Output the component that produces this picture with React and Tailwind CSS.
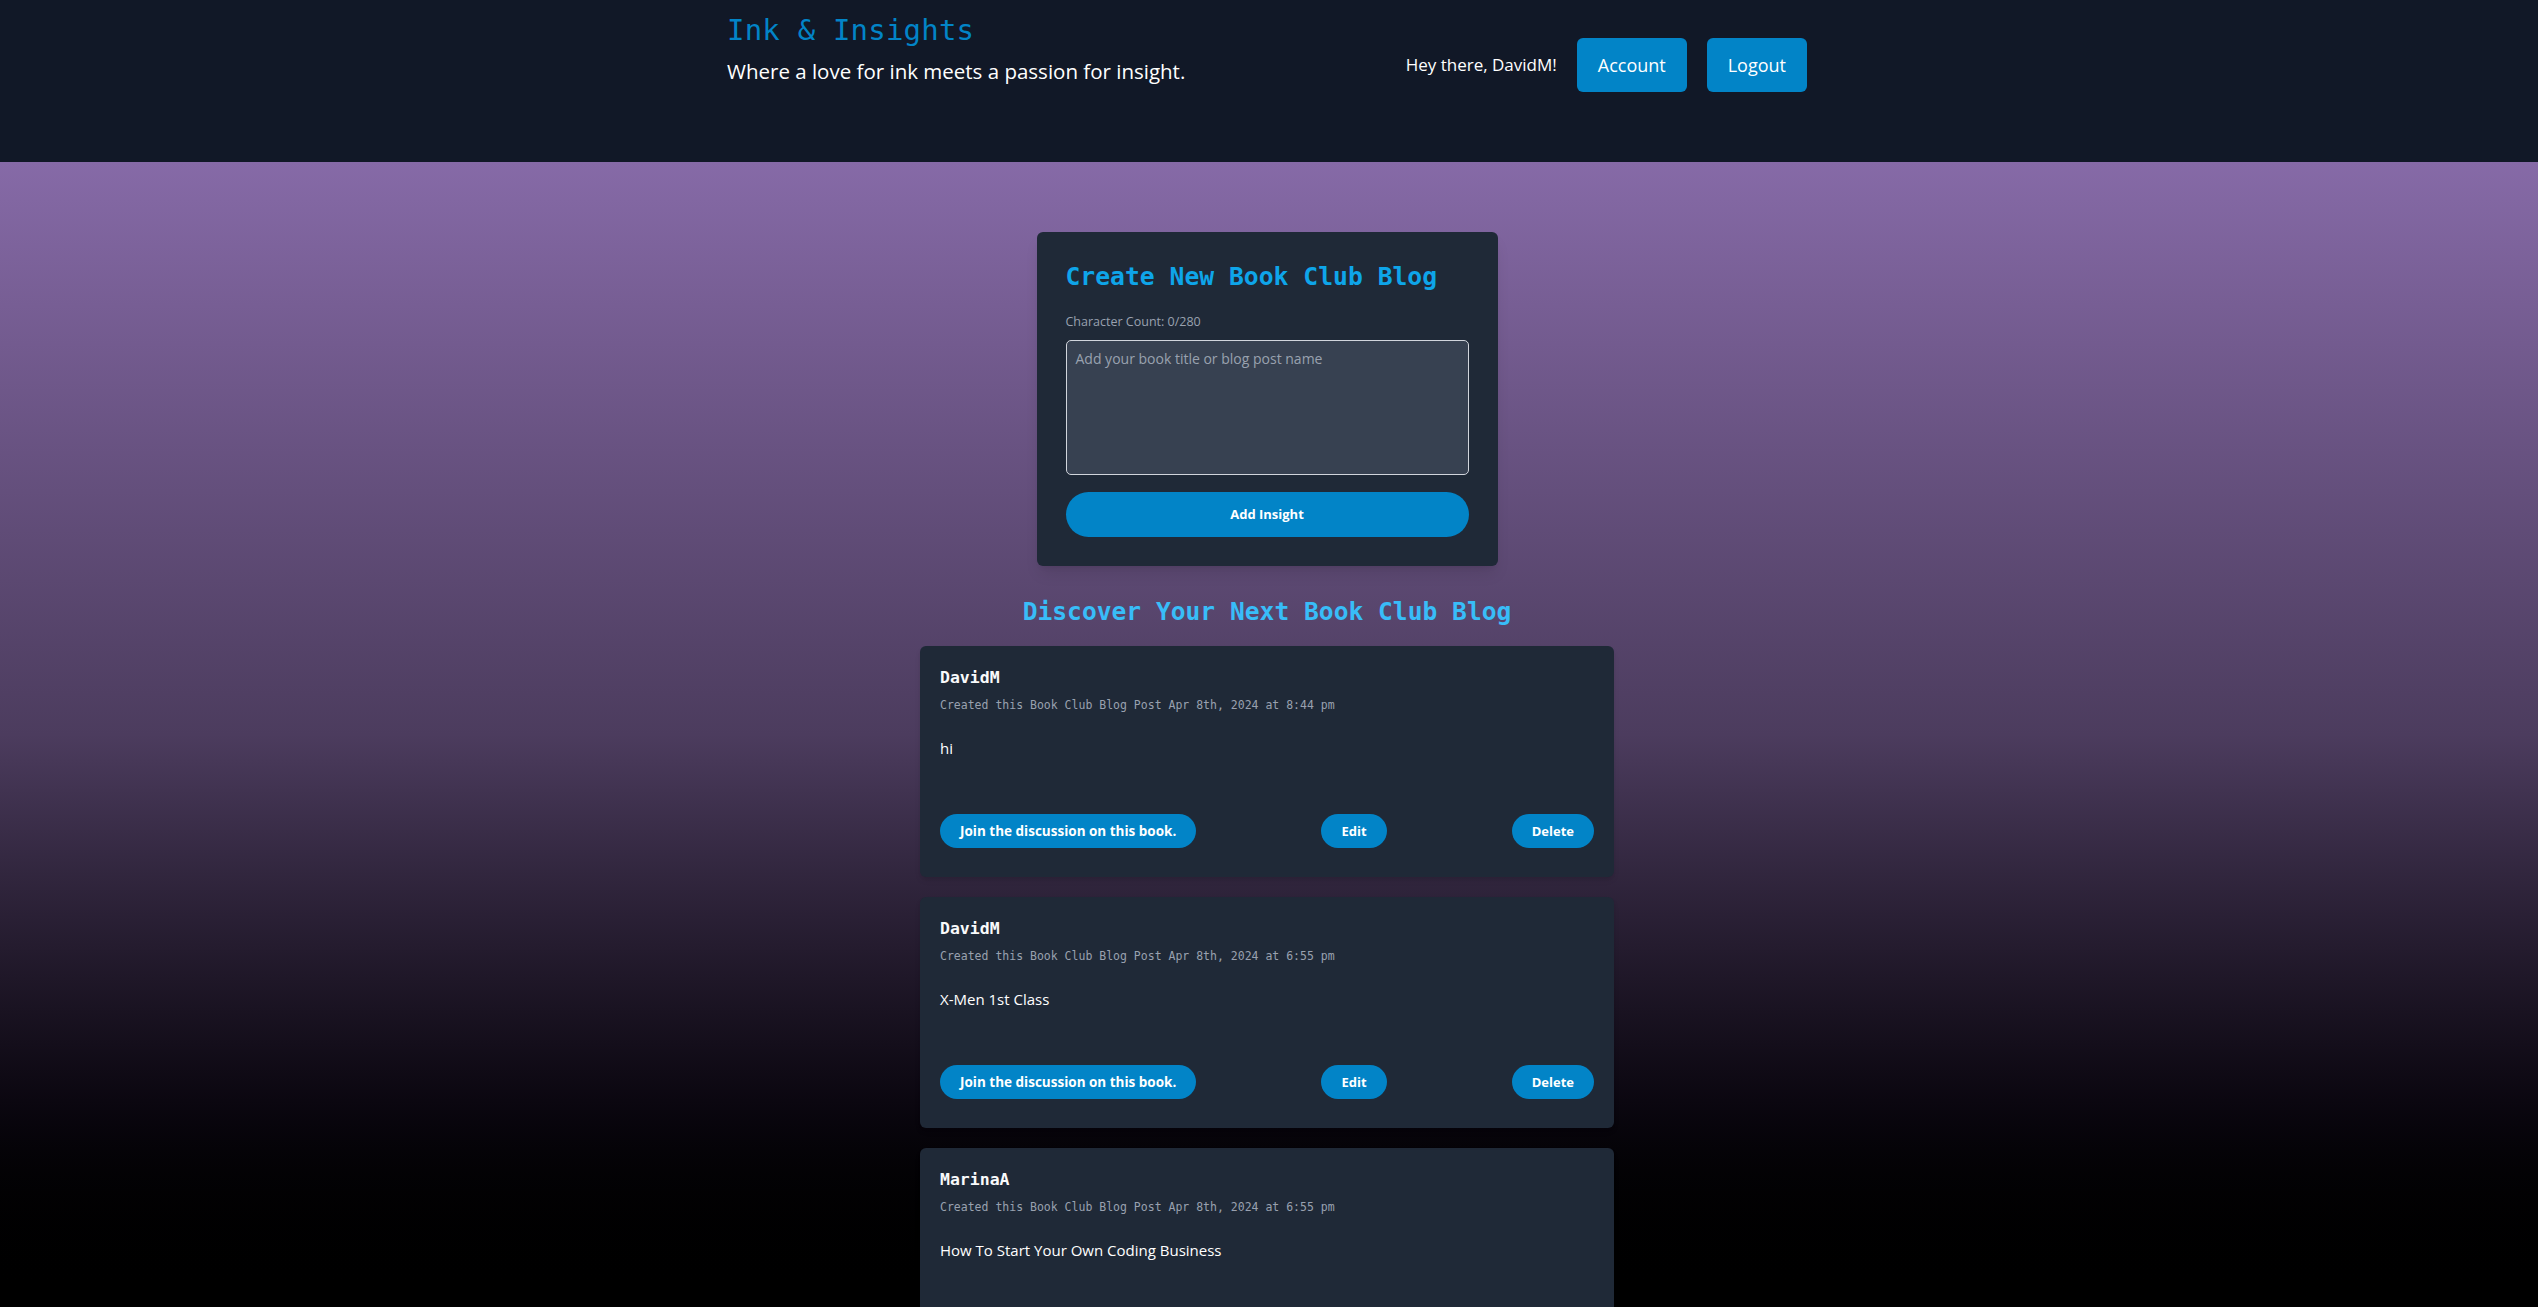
import React, { useState } from 'react';

const posts = [
  { id: 1, author: 'DavidM', date: 'Apr 8th, 2024 at 8:44 pm', text: 'hi' },
  { id: 2, author: 'DavidM', date: 'Apr 8th, 2024 at 6:55 pm', text: 'X-Men 1st Class' },
  { id: 3, author: 'MarinaA', date: 'Apr 8th, 2024 at 6:55 pm', text: 'How To Start Your Own Coding Business' },
];

const PostCard = ({ post }) => {
  return (
    <div className="rounded-md bg-[#1f2937] px-5 pt-5 pb-[29px] shadow-md">
      <h3 className="font-['DejaVu_Sans_Mono',monospace] text-[16.5px] font-bold leading-6 text-gray-50">{post.author}</h3>
      <p className="mt-[6px] font-['DejaVu_Sans_Mono',monospace] text-[11.5px] leading-[18px] text-gray-400">
        Created this Book Club Blog Post {post.date}
      </p>
      <p className="mt-[22px] text-[15px] leading-6 text-white">{post.text}</p>
      <div className="mt-[54px] flex items-center justify-between">
        <button className="rounded-full bg-[#0284c7] px-5 py-[7px] text-[13.5px] font-bold leading-5 text-white">
          Join the discussion on this book.
        </button>
        <button className="rounded-full bg-[#0284c7] px-5 py-[7px] text-[13px] font-bold leading-5 text-white">Edit</button>
        <button className="rounded-full bg-[#0284c7] px-5 py-[7px] text-[13px] font-bold leading-5 text-white">Delete</button>
      </div>
    </div>
  );
};

const App = () => {
  const [draft, setDraft] = useState('');

  return (
    <div className="flex h-screen flex-col overflow-hidden font-['Open_Sans',sans-serif]">
      {/* Header */}
      <header className="h-[162px] shrink-0 bg-[#111827] pr-1">
        <div className="mx-auto flex w-[1080px] items-start justify-between pt-[12px]">
          <div>
            <h1 className="font-['DejaVu_Sans_Mono',monospace] text-[29px] leading-9 tracking-[0.2px] text-[#0284c7]">
              Ink &amp; Insights
            </h1>
            <p className="mt-[9px] text-[20.5px] leading-7 text-white">Where a love for ink meets a passion for insight.</p>
          </div>
          <div className="mt-[26px] flex items-center gap-5">
            <span className="text-[17px] text-white">Hey there, DavidM!</span>
            <button className="h-[54px] rounded-md bg-[#0284c7] px-[21px] text-[18px] text-white">Account</button>
            <button className="h-[54px] rounded-md bg-[#0284c7] px-[21px] text-[18px] text-white">Logout</button>
          </div>
        </div>
      </header>

      {/* Main */}
      <main className="flex-1 overflow-hidden bg-gradient-to-b from-[#866aa7] via-[#4c3c5e] to-black pr-1">
        <div className="mx-auto mt-[70px] w-[461px] rounded-md bg-[#1f2937] px-[29px] pt-7 pb-[29px] shadow-lg">
          <h2 className="font-['DejaVu_Sans_Mono',monospace] text-[24.7px] font-bold leading-[33px] text-[#0ea5e9]">
            Create New Book Club Blog
          </h2>
          <p className="mt-[19px] text-[12.5px] leading-5 text-gray-400">Character Count: {draft.length}/280</p>
          <textarea
            value={draft}
            onChange={(e) => setDraft(e.target.value.slice(0, 280))}
            placeholder="Add your book title or blog post name"
            className="mt-2 block h-[135px] w-full resize-none rounded-[5px] border border-gray-300 bg-[#374151] px-[9px] py-[8px] text-[14px] leading-5 text-white placeholder:text-gray-400 focus:outline-none"
          />
          <button className="mt-[17px] h-[45px] w-full rounded-full bg-[#0284c7] text-[13px] font-bold text-white">
            Add Insight
          </button>
        </div>

        <h2 className="mt-[29px] text-center font-['DejaVu_Sans_Mono',monospace] text-[24.6px] font-bold leading-[33px] text-[#38bdf8]">
          Discover Your Next Book Club Blog
        </h2>

        <div className="mx-auto mt-[18px] flex w-[694px] flex-col gap-5">
          {posts.map((post) => (
            <PostCard key={post.id} post={post} />
          ))}
        </div>
      </main>
    </div>
  );
};

export default App;
